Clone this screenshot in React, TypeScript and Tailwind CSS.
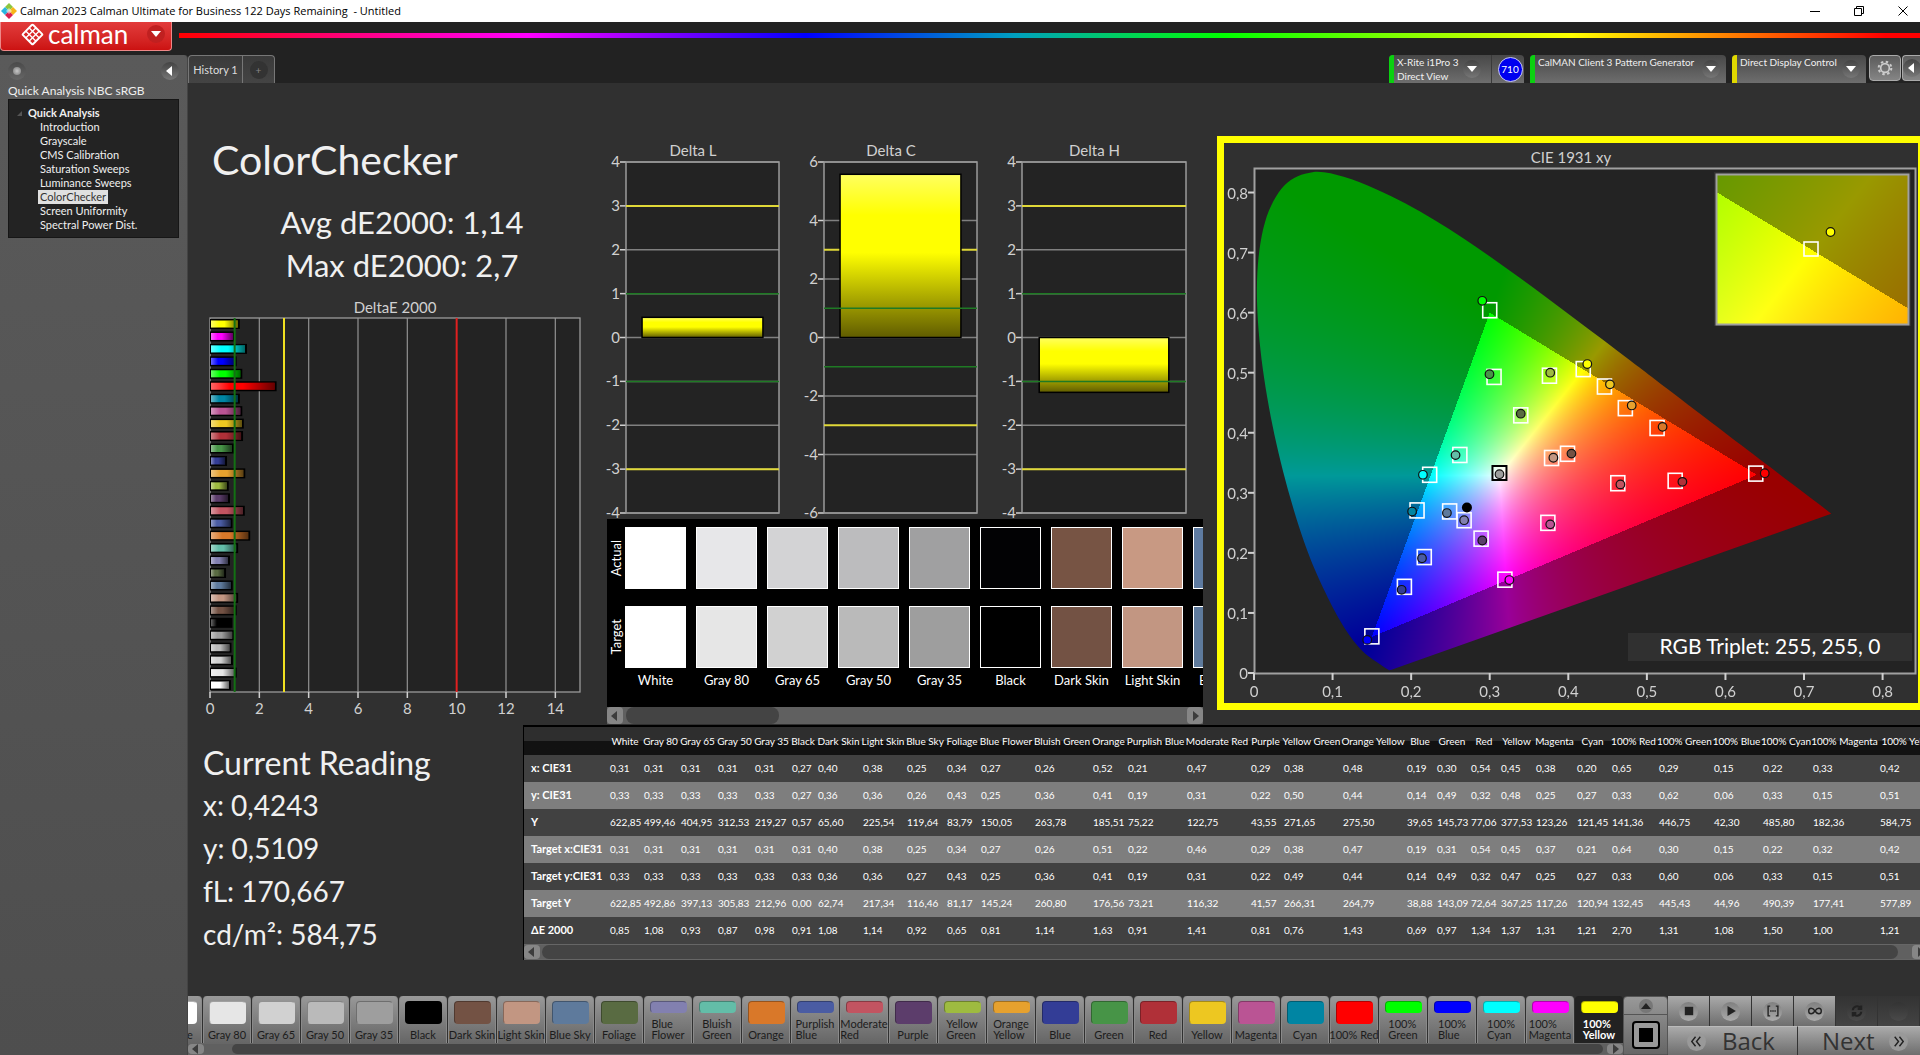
import { useEffect, useRef } from "react";
import type { ReactNode } from "react";
import clsx from "clsx";

type Patch = {
  name: string;
  color: string;
  width: number;
  values: string[];
};

const ROW_LABELS = ["x: CIE31", "y: CIE31", "Y", "Target x:CIE31", "Target y:CIE31", "Target Y", "ΔE 2000"];

const p = (name: string, color: string, width: number, values: string): Patch => ({
  name,
  color,
  width,
  values: values.split(" "),
});

const PATCHES: Patch[] = [
  p("White", "#ffffff", 34, "0,31 0,33 622,85 0,31 0,33 622,85 0,85"),
  p("Gray 80", "#e6e6e6", 37, "0,31 0,33 499,46 0,31 0,33 492,86 1,08"),
  p("Gray 65", "#d1d1d1", 37, "0,31 0,33 404,95 0,31 0,33 397,13 0,93"),
  p("Gray 50", "#bababa", 37, "0,31 0,33 312,53 0,31 0,33 305,83 0,87"),
  p("Gray 35", "#9e9e9e", 37, "0,31 0,33 219,27 0,31 0,33 212,96 0,98"),
  p("Black", "#000000", 26, "0,27 0,27 0,57 0,31 0,33 0,00 0,91"),
  p("Dark Skin", "#735244", 45, "0,40 0,36 65,60 0,40 0,36 62,74 1,08"),
  p("Light Skin", "#c29682", 44, "0,38 0,36 225,54 0,38 0,36 217,34 1,14"),
  p("Blue Sky", "#5e7a9c", 40, "0,25 0,26 119,64 0,25 0,27 116,46 0,92"),
  p("Foliage", "#596b42", 34, "0,34 0,43 83,79 0,34 0,43 81,17 0,65"),
  p("Blue Flower", "#8280b0", 54, "0,27 0,25 150,05 0,27 0,25 145,24 0,81"),
  p("Bluish Green", "#63bda8", 58, "0,26 0,36 263,78 0,26 0,36 260,80 1,14"),
  p("Orange", "#d97829", 35, "0,52 0,41 185,51 0,51 0,41 176,56 1,63"),
  p("Purplish Blue", "#4a5ca3", 59, "0,21 0,19 75,22 0,22 0,19 73,21 0,91"),
  p("Moderate Red", "#c25461", 64, "0,47 0,31 122,75 0,46 0,31 116,32 1,41"),
  p("Purple", "#5c3d6b", 33, "0,29 0,22 43,55 0,29 0,22 41,57 0,81"),
  p("Yellow Green", "#9ebb40", 59, "0,38 0,50 271,65 0,38 0,49 266,31 0,76"),
  p("Orange Yellow", "#e6a12e", 64, "0,48 0,44 275,50 0,47 0,44 264,79 1,43"),
  p("Blue", "#333d96", 30, "0,19 0,14 39,65 0,19 0,14 38,88 0,69"),
  p("Green", "#479447", 34, "0,30 0,49 145,73 0,31 0,49 143,09 0,97"),
  p("Red", "#b03038", 30, "0,54 0,32 77,06 0,54 0,32 72,64 1,34"),
  p("Yellow", "#edc721", 35, "0,45 0,48 377,53 0,45 0,47 367,25 1,37"),
  p("Magenta", "#ba5494", 41, "0,38 0,25 123,26 0,37 0,25 117,26 1,31"),
  p("Cyan", "#0085a3", 35, "0,20 0,27 121,45 0,21 0,27 120,94 1,21"),
  p("100% Red", "#ff0000", 47, "0,65 0,33 141,36 0,64 0,33 132,45 2,70"),
  p("100% Green", "#00ff00", 55, "0,29 0,62 446,75 0,30 0,60 445,43 1,31"),
  p("100% Blue", "#0000ff", 49, "0,15 0,06 42,30 0,15 0,06 44,96 1,08"),
  p("100% Cyan", "#00ffff", 50, "0,22 0,33 485,80 0,22 0,33 490,39 1,50"),
  p("100% Magenta", "#ff00ff", 67, "0,33 0,15 182,36 0,32 0,15 177,41 1,00"),
  p("100% Yellow", "#ffff00", 63, "0,42 0,51 584,75 0,42 0,51 577,89 1,21"),
];

const ACTUAL = ["#ffffff", "#e7e7e9", "#d3d3d5", "#bcbcbe", "#a0a0a1", "#020204", "#775444", "#c89983", "#5e7ba1"];

// spectral locus, CIE 1931 2 degree observer
const LOCUS: [number, number][] = [
  [0.1741, 0.005], [0.1714, 0.0051], [0.1644, 0.0109], [0.1566, 0.0177], [0.144, 0.0297],
  [0.1355, 0.0399], [0.1241, 0.0578], [0.1096, 0.0868], [0.0913, 0.1327], [0.0687, 0.2007],
  [0.0454, 0.295], [0.0235, 0.4127], [0.0082, 0.5384], [0.0039, 0.6548], [0.0139, 0.7502],
  [0.0389, 0.812], [0.0743, 0.8338], [0.1142, 0.8262], [0.1547, 0.8059], [0.1929, 0.7816],
  [0.2296, 0.7543], [0.2658, 0.7243], [0.3016, 0.6923], [0.3373, 0.6589], [0.3731, 0.6245],
  [0.4087, 0.5896], [0.4441, 0.5547], [0.4788, 0.5202], [0.5125, 0.4866], [0.5752, 0.4242],
  [0.627, 0.3725], [0.6915, 0.3083], [0.7347, 0.2653],
];

// target x, target y, measured x, measured y, fill
const POINTS: [number, number, number, number, string][] = [
  [0.3, 0.604, 0.2905, 0.6197, "#00ff00"],
  [0.3055, 0.493, 0.2997, 0.4975, "#479447"],
  [0.376, 0.495, 0.377, 0.5, "#9ebb40"],
  [0.419, 0.506, 0.4242, 0.5144, "#ffff00"],
  [0.446, 0.477, 0.453, 0.4806, "#edc721"],
  [0.4726, 0.441, 0.4807, 0.4455, "#e6a12e"],
  [0.513, 0.408, 0.52, 0.4098, "#d97829"],
  [0.3395, 0.429, 0.3395, 0.4317, "#596b42"],
  [0.262, 0.363, 0.2565, 0.3628, "#63bda8"],
  [0.2236, 0.33, 0.215, 0.33, "#00ffff"],
  [0.3787, 0.358, 0.381, 0.3584, "#c29682"],
  [0.399, 0.365, 0.404, 0.3653, "#735244"],
  [0.463, 0.316, 0.4663, 0.314, "#c25461"],
  [0.536, 0.32, 0.5452, 0.3183, "#b03038"],
  [0.6386, 0.332, 0.65, 0.3327, "#ff0000"],
  [0.2075, 0.2707, 0.2012, 0.2688, "#0085a3"],
  [0.249, 0.269, 0.2455, 0.2663, "#5e7a9c"],
  [0.2674, 0.2544, 0.2674, 0.2544, "#8280b0"],
  [0.289, 0.2237, 0.2905, 0.2206, "#5c3d6b"],
  [0.374, 0.25, 0.377, 0.2475, "#ba5494"],
  [0.2167, 0.193, 0.2138, 0.1911, "#4a5ca3"],
  [0.1914, 0.1435, 0.1879, 0.1385, "#333d96"],
  [0.3193, 0.1554, 0.325, 0.1548, "#ff00ff"],
  [0.15, 0.061, 0.1441, 0.0551, "#0000ff"],
];

const TREE = [
  "Introduction",
  "Grayscale",
  "CMS Calibration",
  "Saturation Sweeps",
  "Luminance Sweeps",
  "ColorChecker",
  "Screen Uniformity",
  "Spectral Power Dist.",
];

type GamutProps = {
  width: number;
  height: number;
  x0: number;
  y0: number;
  sx: number;
  sy: number;
  clip?: boolean;
};

// x0/y0: chromaticity at the bottom left corner, sx/sy: pixels per unit
const GamutCanvas = ({ width, height, x0, y0, sx, sy, clip }: GamutProps) => {
  const ref = useRef<HTMLCanvasElement>(null);

  useEffect(() => {
    const canvas = ref.current;
    const ctx = canvas?.getContext("2d");
    if (!canvas || !ctx) return;

    const buffer = document.createElement("canvas");
    buffer.width = width;
    buffer.height = height;
    const bctx = buffer.getContext("2d")!;
    const img = bctx.createImageData(width, height);
    for (let j = 0; j < height; j++) {
      for (let i = 0; i < width; i++) {
        const x = x0 + (i + 0.5) / sx;
        const y = Math.max(y0 + (height - j - 0.5) / sy, 0.001);
        const z = 1 - x - y;
        const rgb = [
          3.2406 * x - 1.5372 * y - 0.4986 * z,
          -0.9689 * x + 1.8758 * y + 0.0415 * z,
          0.0557 * x - 0.204 * y + 1.057 * z,
        ];
        const inside = Math.min(...rgb) >= 0;
        const max = Math.max(...rgb);
        const k = (inside ? 255 : 153) / max;
        const o = (j * width + i) * 4;
        rgb.forEach((v, n) => {
          img.data[o + n] = Math.max(v, 0) * k;
        });
        img.data[o + 3] = 255;
      }
    }
    bctx.putImageData(img, 0, 0);

    ctx.clearRect(0, 0, width, height);
    ctx.save();
    if (clip) {
      const pts = LOCUS.map(([x, y]) => [(x - x0) * sx, height - (y - y0) * sy]);
      ctx.beginPath();
      ctx.moveTo(pts[0][0], pts[0][1]);
      for (let i = 0; i < pts.length - 1; i++) {
        const a = pts[Math.max(i - 1, 0)];
        const b = pts[i];
        const c = pts[i + 1];
        const d = pts[Math.min(i + 2, pts.length - 1)];
        ctx.bezierCurveTo(
          b[0] + (c[0] - a[0]) / 6,
          b[1] + (c[1] - a[1]) / 6,
          c[0] - (d[0] - b[0]) / 6,
          c[1] - (d[1] - b[1]) / 6,
          c[0],
          c[1],
        );
      }
      ctx.closePath();
      ctx.clip();
    }
    ctx.drawImage(buffer, 0, 0);
    ctx.restore();
  }, [width, height, x0, y0, sx, sy, clip]);

  return <canvas ref={ref} width={width} height={height} className="block" />;
};

const TARGET_W = 14;
const TARGET_H = 15;

const CieChart = () => {
  const left = 30;
  const bottom = 530;
  const px = (x: number) => left + x * 785.75;
  const py = (y: number) => bottom - y * 600.6;
  const ticks = [0, 1, 2, 3, 4, 5, 6, 7, 8];
  const label = (t: number) => (t === 0 ? "0" : `0,${t}`);

  return (
    <svg viewBox="0 0 694 560" className="block w-full" role="img" aria-label="CIE 1931 xy">
      <text x="347" y="20" textAnchor="middle" fontSize="15" fill="#d0d0d0">
        CIE 1931 xy
      </text>
      <rect x="30" y="25" width="661" height="505" fill="#232323" />
      <foreignObject x="30" y="25" width="661" height="505">
        <GamutCanvas width={661} height={505} x0={0} y0={0} sx={785.75} sy={600.6} clip />
      </foreignObject>
      <rect x="30.5" y="25.5" width="661" height="505" fill="none" stroke="#a0a0a0" strokeWidth="2" />
      {ticks.map((t) => (
        <g key={t} fontSize="15" fill="#d0d0d0" stroke="none">
          <line x1={px(t / 10)} x2={px(t / 10)} y1="530" y2="537" stroke="#d0d0d0" strokeWidth="2" />
          <line x1="24" x2="30" y1={py(t / 10)} y2={py(t / 10)} stroke="#d0d0d0" strokeWidth="2" />
          <text x={px(t / 10)} y="554" textAnchor="middle">
            {label(t)}
          </text>
          <text x="24" y={py(t / 10) + 6} textAnchor="end">
            {label(t)}
          </text>
        </g>
      ))}
      {POINTS.map(([tx, ty]) => (
        <rect
          key={`${tx}-${ty}`}
          x={px(tx) - TARGET_W / 2}
          y={py(ty) - TARGET_H / 2}
          width={TARGET_W}
          height={TARGET_H}
          fill="none"
          stroke="#fff"
          strokeWidth="1.6"
        />
      ))}
      <rect
        x={px(0.3124) - 7}
        y={py(0.333) - 7}
        width="14"
        height="14"
        fill="#fff"
        fillOpacity="0.5"
        stroke="#000"
        strokeWidth="2"
      />
      {POINTS.map(([, , mx, my, color]) => (
        <circle key={`${mx}-${my}`} cx={px(mx)} cy={py(my)} r="4.3" fill={color} stroke="#111" strokeWidth="1.2" />
      ))}
      <circle cx={px(0.3124)} cy={py(0.331)} r="4.3" fill="#9e9e9e" stroke="#111" strokeWidth="1.2" />
      <circle cx={px(0.271)} cy={py(0.2757)} r="5" fill="#000" />

      <rect x="490" y="29" width="197" height="154" fill="#303030" />
      <foreignObject x="492" y="31" width="193" height="150">
        <GamutCanvas width={193} height={150} x0={0.3925} y0={0.4785} sx={3600} sy={2752} />
      </foreignObject>
      <rect x="492.5" y="31.5" width="192" height="150" fill="none" stroke="#a0a0a0" strokeWidth="2" />
      <rect x="580" y="99" width="14" height="14" fill="none" stroke="#fff" strokeWidth="1.6" />
      <circle cx="606.5" cy="89" r="4.3" fill="#ffff00" stroke="#111" strokeWidth="1.2" />

      <rect x="404" y="490" width="284" height="28" fill="#303030" />
      <text x="546" y="511" textAnchor="middle" fontSize="21" fill="#fff">
        RGB Triplet: 255, 255, 0
      </text>
    </svg>
  );
};

const DeltaEChart = () => {
  const px = (v: number) => 22 + (v * 370) / 15;
  const bars = [...PATCHES].reverse();

  return (
    <svg viewBox="0 0 412 438" className="block w-full" role="img" aria-label="DeltaE 2000">
      <defs>
        <linearGradient id="barShadeX" x1="0" x2="1" y1="0" y2="0">
          <stop offset="0" stopColor="#ffffff" stopOpacity="0.4" />
          <stop offset="0.3" stopColor="#ffffff" stopOpacity="0" />
          <stop offset="0.5" stopColor="#000000" stopOpacity="0" />
          <stop offset="1" stopColor="#000000" stopOpacity="0.6" />
        </linearGradient>
      </defs>
      <text x="207" y="26" textAnchor="middle" fontSize="15" fill="#d0d0d0">
        DeltaE 2000
      </text>
      <rect x="22" y="31" width="370" height="374" fill="#232323" />
      {[2, 4, 6, 8, 12, 14].map((t) => (
        <line key={t} x1={px(t)} x2={px(t)} y1="31" y2="405" stroke="#8a8a8a" strokeWidth="1.3" />
      ))}
      <rect x="22" y="31" width="370" height="374" fill="none" stroke="#9a9a9a" strokeWidth="1.3" />
      {bars.map((patch, i) => {
        const v = parseFloat(patch.values[6].replace(",", "."));
        const y = 32 + i * 12.45;
        return (
          <g key={patch.name}>
            <rect x="22" y={y} width={px(v) - 22} height="10" fill="#000" />
            <rect x="23" y={y + 1.5} width={px(v) - 25} height="7" fill={patch.color} />
            <rect x="23" y={y + 1.5} width={px(v) - 25} height="7" fill="url(#barShadeX)" />
          </g>
        );
      })}
      <line x1={px(1)} x2={px(1)} y1="31" y2="405" stroke="#137013" strokeWidth="2" />
      <line x1={px(3)} x2={px(3)} y1="31" y2="405" stroke="#f0e020" strokeWidth="2" />
      <line x1={px(10)} x2={px(10)} y1="31" y2="405" stroke="#e02020" strokeWidth="2" />
      {[0, 2, 4, 6, 8, 10, 12, 14].map((t) => (
        <g key={t}>
          <line x1={px(t)} x2={px(t)} y1="405" y2="411" stroke="#d0d0d0" strokeWidth="1.5" />
          <text x={px(t)} y="427" textAnchor="middle" fontSize="15" fill="#d0d0d0">
            {t}
          </text>
        </g>
      ))}
    </svg>
  );
};

type DeltaChartProps = {
  title: string;
  id: string;
  width: number;
  max: number;
  step: number;
  value: number;
};

const DeltaChart = ({ title, id, width, max, step, value }: DeltaChartProps) => {
  const left = 26;
  const right = width - 19;
  const top = 27;
  const bottom = 378;
  const plot = right - left;
  const py = (v: number) => top + ((max - v) * (bottom - top)) / (2 * max);
  const ticks: number[] = [];
  for (let t = -max; t <= max; t += step) ticks.push(t);
  const barTop = py(Math.max(value, 0));
  const barHeight = py(Math.min(value, 0)) - barTop;
  const barLeft = left + plot * 0.105;
  const barWidth = plot * 0.79;

  return (
    <svg viewBox={`0 0 ${width} 384`} className="block w-full" role="img" aria-label={title}>
      <defs>
        <linearGradient id={id} x1="0" x2="0" y1="0" y2="1">
          <stop offset="0" stopColor="#ffff60" />
          <stop offset="0.25" stopColor="#ffff00" />
          <stop offset="0.48" stopColor="#ffff00" />
          <stop offset="1" stopColor="#605c00" />
        </linearGradient>
      </defs>
      <text x={width / 2 - 6} y="21" textAnchor="middle" fontSize="15" fill="#d0d0d0">
        {title}
      </text>
      <rect x={left} y={top} width={plot} height={bottom - top} fill="#232323" />
      {ticks.map((t) => (
        <g key={t}>
          <line x1={left} x2={right} y1={py(t)} y2={py(t)} stroke="#808080" strokeWidth="1.5" />
          <line x1={left - 6} x2={left} y1={py(t)} y2={py(t)} stroke="#d0d0d0" strokeWidth="1.5" />
          <text x={left - 6} y={py(t) + 5} textAnchor="end" fontSize="15" fill="#d0d0d0">
            {t}
          </text>
        </g>
      ))}
      <rect x={left} y={top} width={plot} height={bottom - top} fill="none" stroke="#9a9a9a" strokeWidth="1.5" />
      {[3, -3].map((t) => (
        <line key={t} x1={left} x2={right} y1={py(t)} y2={py(t)} stroke="#e0d838" strokeWidth="2" />
      ))}
      <rect
        x={barLeft}
        y={barTop}
        width={barWidth}
        height={barHeight}
        fill={`url(#${id})`}
        stroke="#000"
        strokeWidth="1.5"
      />
      {[1, -1].map((t) => (
        <line key={t} x1={left} x2={right} y1={py(t)} y2={py(t)} stroke="#1f7a24" strokeWidth="1.5" />
      ))}
    </svg>
  );
};

type ArrowProps = {
  dir: "left" | "right" | "up" | "down";
  className?: string;
};

const ARROWS = {
  left: "M7 0 L1 5 L7 10 Z",
  right: "M3 0 L9 5 L3 10 Z",
  up: "M0 8 L5 2 L10 8 Z",
  down: "M0 2 L5 8 L10 2 Z",
};

const Arrow = ({ dir, className }: ArrowProps) => (
  <svg viewBox="0 0 10 10" className={clsx("size-2.5", className)} fill="currentColor" aria-hidden="true">
    <path d={ARROWS[dir]} />
  </svg>
);

const RoundArrow = ({ dir }: ArrowProps) => (
  <span className="grid size-[18px] shrink-0 place-items-center rounded-full bg-linear-to-b from-[#444] to-[#777] text-white">
    <Arrow dir={dir} />
  </span>
);

type ScrollbarProps = {
  label: string;
  className?: string;
  thumb: string;
};

const Scrollbar = ({ label, className, thumb }: ScrollbarProps) => (
  <div className={clsx("flex items-stretch bg-[#606060]", className)}>
    <button
      type="button"
      aria-label={`Scroll ${label} left`}
      className="grid w-4 shrink-0 place-items-center rounded-sm bg-[#868686] text-[#3c3c3c]"
    >
      <Arrow dir="left" />
    </button>
    <div className="flex min-w-0 flex-1">
      <div className={clsx("rounded-lg bg-[#444]", thumb)} />
    </div>
    <button
      type="button"
      aria-label={`Scroll ${label} right`}
      className="grid w-4 shrink-0 place-items-center rounded-sm bg-[#868686] text-[#3c3c3c]"
    >
      <Arrow dir="right" />
    </button>
  </div>
);

const TitleBar = () => (
  <header className="flex h-[22px] items-center bg-white text-black">
    <svg viewBox="0 0 16 16" className="ml-px size-4" aria-hidden="true">
      <path d="M8 0 L12 4 L8 8 L4 4 Z" fill="#8dc63f" />
      <path d="M4 4 L8 8 L4 12 L0 8 Z" fill="#29b6e0" />
      <path d="M12 4 L16 8 L12 12 L8 8 Z" fill="#f7b518" />
      <path d="M8 8 L12 12 L8 16 L4 12 Z" fill="#d8204f" />
      <path d="M8 5 L11 8 L8 11 L5 8 Z" fill="#fff" fillOpacity="0.55" />
    </svg>
    <h1 className="ml-[3px] font-['Open_Sans',sans-serif] text-[11px] whitespace-pre">
      Calman 2023 Calman Ultimate for Business 122 Days Remaining  - Untitled
    </h1>
    <div className="ml-auto flex">
      <button type="button" aria-label="Minimize" className="grid w-11 place-items-center">
        <svg viewBox="0 0 10 10" className="size-2.5" stroke="currentColor" fill="none">
          <path d="M0 5.5 H10" />
        </svg>
      </button>
      <button type="button" aria-label="Restore" className="grid w-11 place-items-center">
        <svg viewBox="0 0 10 10" className="size-2.5" stroke="currentColor" fill="none">
          <path d="M0.5 2.5 H7.5 V9.5 H0.5 Z M2.5 2.5 V0.5 H9.5 V7.5 H7.5" />
        </svg>
      </button>
      <button type="button" aria-label="Close" className="mr-[-5px] grid w-11 place-items-center">
        <svg viewBox="0 0 10 10" className="size-2.5" stroke="currentColor" fill="none">
          <path d="M0.5 0.5 L9.5 9.5 M9.5 0.5 L0.5 9.5" />
        </svg>
      </button>
    </div>
  </header>
);

const BrandBar = () => (
  <div className="flex h-[33px] items-start">
    <button
      type="button"
      className="flex h-[29px] w-[172px] items-center rounded-b-sm border border-t-0 border-[#e88] bg-linear-to-b from-[#e23b3b] to-[#cc1111] pb-1 pl-5 text-white"
    >
      <svg viewBox="0 0 24 24" className="size-[23px]" aria-hidden="true">
        <g transform="rotate(45 12 12)">
          <rect x="3.500" y="3.500" width="17" height="17" rx="2" fill="#fff" />
          <path
            d="M5.500 5.500 h3.400 v3.400 h-3.400 Z M10.300 5.500 h3.400 v3.400 h-3.400 Z M15.100 5.500 h3.400 v3.400 h-3.400 Z M5.500 10.300 h3.400 v3.400 h-3.400 Z M10.300 10.300 h3.400 v3.400 h-3.400 Z M15.100 10.300 h3.400 v3.400 h-3.400 Z M5.500 15.100 h3.400 v3.400 h-3.400 Z M10.300 15.100 h3.400 v3.400 h-3.400 Z M15.100 15.100 h3.400 v3.400 h-3.400 Z"
            fill="#d82828"
          />
        </g>
      </svg>
      <span className="ml-1 text-[26px] leading-6">calman</span>
      <span className="mr-1.5 ml-auto grid size-[18px] place-items-center rounded-full bg-[#c02020]">
        <Arrow dir="down" />
      </span>
    </button>
    <div className="mt-[11px] ml-[7px] h-[5px] flex-1 [background-image:linear-gradient(to_right,#ff0000,#ff00ff_20%,#0000ff_36%,#00a0c0_48%,#00ff00_60%,#ffff00_80%,#ff0000_98%)]" />
  </div>
);

const Sidebar = () => (
  <aside className="w-[188px] shrink-0 rounded-tr-sm border-r border-[#444] bg-linear-to-b from-[#5a5a5a] to-[#4e4e4e] px-2">
    <div className="flex h-7 items-center justify-between pt-[3px]">
      <button
        type="button"
        aria-label="Workflow options"
        className="grid size-[18px] place-items-center rounded-full bg-linear-to-b from-[#4a4a4a] to-[#666]"
      >
        <span className="size-2 rounded-full bg-radial from-[#c8c8c8] to-[#777]" />
      </button>
      <button type="button" aria-label="Collapse sidebar">
        <RoundArrow dir="left" />
      </button>
    </div>
    <h2 className="text-[12px] leading-4 whitespace-nowrap text-[#eee]">Quick Analysis NBC sRGB</h2>
    <nav className="h-[139px] border border-[#161616] bg-[#232323] pt-1.5 text-[11px] text-[#f0f0f0]">
      <p className="flex items-center leading-[14px] font-bold">
        <svg viewBox="0 0 6 6" className="mr-1.5 ml-2 size-[5px] fill-[#555]" aria-hidden="true">
          <path d="M6 0 V6 H0 Z" />
        </svg>
        Quick Analysis
      </p>
      <ul className="ml-[29px]">
        {TREE.map((item) => (
          <li key={item} className="flex h-[14px]">
            <button
              type="button"
              className={clsx(
                "px-0.5 leading-[14px] whitespace-nowrap",
                item === "ColorChecker" && "bg-[#e0e0e0] text-[#333]",
              )}
            >
              {item}
            </button>
          </li>
        ))}
      </ul>
    </nav>
  </aside>
);

type DeviceTabProps = {
  status: "green" | "yellow";
  className?: string;
  children: ReactNode;
};

const DeviceTab = ({ status, className, children }: DeviceTabProps) => (
  <div className={clsx("flex h-7 overflow-hidden rounded-t bg-linear-to-b from-[#484848] to-[#6e6e6e]", className)}>
    <div className={clsx("w-[5px] shrink-0", status === "green" ? "bg-[#0bd010]" : "bg-[#e0d800]")} />
    {children}
  </div>
);

const TabBar = () => (
  <div className="flex h-7 items-start text-[10px] leading-[14px] text-[#f0f0f0]">
    <div className="flex h-7 rounded-t border border-b-0 border-[#777] bg-linear-to-b from-[#3a3a3a] to-[#444]">
      <button type="button" className="w-[54px] border-r border-[#777] text-center text-[11px] text-[#ddd]">
        History 1
      </button>
      <button type="button" aria-label="Add history" className="grid w-[31px] place-items-center">
        <span className="grid size-[18px] place-items-center rounded-full bg-[#333] text-[#888]">+</span>
      </button>
    </div>
    <div className="ml-auto flex">
      <DeviceTab status="green" className="w-[135px]">
        <button
          type="button"
          className="flex flex-1 items-center justify-between pr-2.5 pl-[3px] text-left whitespace-nowrap"
        >
          <span>
            X-Rite i1Pro 3<br />
            Direct View
          </span>
          <RoundArrow dir="down" />
        </button>
        <div className="grid w-[33px] place-items-center border-l border-[#3a3a3a] pl-1">
          <span className="grid size-[25px] place-items-center rounded-full border border-[#cce] bg-[#0000f0] text-white">
            710
          </span>
        </div>
      </DeviceTab>
      <DeviceTab status="green" className="ml-1.5 w-[196px]">
        <button type="button" className="flex flex-1 justify-between pr-1.5 pl-[3px] text-left whitespace-nowrap">
          CalMAN Client 3 Pattern Generator
          <span className="mt-[5px]">
            <RoundArrow dir="down" />
          </span>
        </button>
      </DeviceTab>
      <DeviceTab status="yellow" className="ml-1.5 w-[134px]">
        <button type="button" className="flex flex-1 justify-between pr-1.5 pl-[3px] text-left whitespace-nowrap">
          Direct Display Control
          <span className="mt-[5px]">
            <RoundArrow dir="down" />
          </span>
        </button>
      </DeviceTab>
      <button
        type="button"
        aria-label="Settings"
        className="ml-[3px] grid h-[26px] w-8 place-items-center rounded border border-[#aaa] bg-linear-to-b from-[#5c5c5c] to-[#858585]"
      >
        <svg viewBox="0 0 24 24" className="size-4" fill="none" stroke="#ccc" aria-hidden="true">
          <circle cx="12" cy="12" r="6.5" strokeWidth="2.5" />
          <circle cx="12" cy="12" r="9.5" strokeWidth="3" strokeDasharray="3.7 3.76" />
        </svg>
      </button>
      <button
        type="button"
        aria-label="Collapse panel"
        className="ml-px grid h-[26px] w-[18px] place-items-center overflow-hidden rounded-l border border-r-0 border-[#aaa] bg-linear-to-b from-[#5c5c5c] to-[#858585]"
      >
        <RoundArrow dir="left" />
      </button>
    </div>
  </div>
);

const SwatchRow = ({ label, colors }: { label: string; colors: string[] }) => (
  <div className="flex h-[62px]">
    <div className="grid w-[18px] shrink-0 place-items-center">
      <span className="rotate-180 text-[13px] leading-4 text-white [writing-mode:vertical-rl]">{label}</span>
    </div>
    <div className="flex gap-2.5">
      {colors.map((color, i) => (
        <div key={i} className="w-[61px] shrink-0 border border-white" style={{ backgroundColor: color }} />
      ))}
    </div>
  </div>
);

const SwatchPanel = () => (
  <section className="mr-0.5 ml-[7px] bg-black">
    <div className="overflow-hidden pt-2 pb-[19px]">
      <SwatchRow label="Actual" colors={ACTUAL} />
      <div className="h-[17px]" />
      <SwatchRow label="Target" colors={PATCHES.slice(0, 9).map((patch) => patch.color)} />
      <div className="ml-[18px] flex gap-2.5 pt-1 text-[13px] leading-4 text-white">
        {PATCHES.slice(0, 9).map((patch) => (
          <span key={patch.name} className="w-[61px] shrink-0 text-center whitespace-nowrap">
            {patch.name}
          </span>
        ))}
      </div>
    </div>
    <Scrollbar label="swatches" className="h-[17px]" thumb="ml-[3px] w-[153px]" />
  </section>
);

const ReadingsTable = () => (
  <div className="min-w-0 flex-1 overflow-hidden border-t-2 border-l border-black bg-[#444]">
    <table className="w-[1417px] table-fixed border-collapse text-[10px] whitespace-nowrap text-white">
      <colgroup>
        <col className="w-[84px]" />
        {PATCHES.map((patch) => (
          <col key={patch.name} style={{ width: patch.width }} />
        ))}
      </colgroup>
      <thead>
        <tr className="h-7 bg-linear-to-b from-[#2e2e2e] from-50% to-[#121212] to-50%">
          <td />
          {PATCHES.map((patch) => (
            <th key={patch.name} scope="col" className="p-0 text-center font-normal">
              {patch.name}
            </th>
          ))}
        </tr>
      </thead>
      <tbody>
        {ROW_LABELS.map((label, row) => (
          <tr key={label} className="h-[27px] odd:bg-[#414141] even:bg-[#7e7e7e]">
            <th scope="row" className="p-0 pl-[7px] text-left text-[11px] font-bold">
              {label}
            </th>
            {PATCHES.map((patch) => (
              <td key={patch.name} className="p-0 pl-0.5">
                {patch.values[row]}
              </td>
            ))}
          </tr>
        ))}
      </tbody>
    </table>
    <Scrollbar label="readings" className="-mr-2 h-4 border-y border-[#666]" thumb="ml-0.5 mr-3.5 flex-1" />
  </div>
);

const PatchStrip = () => (
  <div className="min-w-0 flex-1 overflow-hidden">
    <div className="ml-[-34px] flex gap-px">
      {PATCHES.map((patch) => {
        const selected = patch.name === "100% Yellow";
        const parts = patch.name.split(" ");
        const twoLines = parts.length === 2 && (patch.name.length > 10 || patch.name.startsWith("100% ")) && parts[1] !== "Red" || patch.name === "Moderate Red";
        return (
          <button
            key={patch.name}
            type="button"
            className={clsx(
              "flex h-[47px] w-12 shrink-0 flex-col items-center rounded-t border-x pt-[5px] text-[11px] leading-[11px]",
              selected
                ? "border-[#222] bg-[#222] font-bold text-white"
                : "border-[#8a8a8a] bg-linear-to-b from-[#999] to-[#666] text-[#1c1c1c]",
            )}
          >
            <span
              className={clsx(
                "w-[37px] shrink-0 rounded-sm border border-t-black/30 border-r-transparent border-b-transparent border-l-black/30",
                twoLines ? "h-3" : "h-[23px]",
              )}
              style={{ backgroundColor: patch.color }}
            />
            <span className={clsx("mt-[5px] text-left", !twoLines && "whitespace-nowrap")}>
              {twoLines ? (
                <>
                  {parts[0]}
                  <br />
                  {parts[1]}
                </>
              ) : (
                patch.name
              )}
            </span>
          </button>
        );
      })}
    </div>
    <Scrollbar label="patches" className="h-3 border-y border-[#666]" thumb="ml-7 mr-1 flex-1" />
  </div>
);

const TRANSPORT: { label: string; icon: ReactNode; off?: boolean }[] = [
  { label: "Stop", icon: <rect x="4" y="4" width="12" height="12" fill="currentColor" stroke="none" /> },
  { label: "Play", icon: <path d="M5 3 L17 10 L5 17 Z" fill="currentColor" stroke="none" /> },
  { label: "Read series", icon: <path d="M6 3 H3 V17 H6 M14 3 H17 V17 H14 M6 10 H8 M9 10 H11 M12 10 H14" /> },
  {
    label: "Read continuous",
    icon: (
      <path d="M10 10 C8 7 6.500 6 4.500 6 C2.500 6 1 8 1 10 C1 12 2.500 14 4.500 14 C6.500 14 8 13 10 10 C12 7 13.500 6 15.500 6 C17.500 6 19 8 19 10 C19 12 17.500 14 15.500 14 C13.500 14 12 13 10 10 Z" />
    ),
  },
  {
    label: "Repeat",
    icon: <path strokeWidth="3" d="M4 9 A6 6 0 0 1 15 6 M16 2 V7 H11 M16 11 A6 6 0 0 1 5 14 M4 18 V13 H9" />,
    off: true,
  },
  { label: "Options", icon: null, off: true },
];

const BottomBar = () => (
  <footer className="flex h-[59px] shrink-0 text-[#222]">
    <PatchStrip />
    <div className="flex w-[45px] shrink-0 flex-col rounded-t border border-[#555] bg-linear-to-b from-[#999] to-[#666]">
      <button type="button" aria-label="Expand" className="grid h-[18px] place-items-center border-b border-[#555]">
        <span className="grid size-3.5 place-items-center rounded-full bg-[#777]">
          <Arrow dir="up" className="size-2" />
        </span>
      </button>
      <button type="button" aria-label="Pattern window" className="grid flex-1 place-items-center">
        <span className="grid size-7 place-items-center rounded-sm border-2 border-black bg-[#999]">
          <span className="size-3.5 bg-black" />
        </span>
      </button>
    </div>
    <div className="flex w-[252px] shrink-0 flex-col">
      <div className="flex h-[30px]">
        {TRANSPORT.map((item) => (
          <button
            key={item.label}
            type="button"
            aria-label={item.label}
            disabled={item.off}
            className={clsx(
              "grid flex-1 place-items-center border-r border-[#333] bg-linear-to-b",
              item.off ? "from-[#333] to-[#444]" : "from-[#aaa] to-[#6e6e6e]",
            )}
          >
            <span
              className={clsx(
                "grid size-[19px] place-items-center rounded-full bg-linear-to-b",
                item.off ? "from-[#333] to-[#4a4a4a]" : "from-[#808080] to-[#aaa]",
              )}
            >
              <svg viewBox="0 0 20 20" className="size-3.5" fill="none" stroke="currentColor" strokeWidth="2">
                {item.icon}
              </svg>
            </span>
          </button>
        ))}
      </div>
      <div className="flex flex-1 text-[24px] leading-6 text-[#333]">
        <button
          type="button"
          className="flex w-[130px] items-center gap-4 border-t border-r border-t-[#bbb] border-r-[#333] bg-linear-to-b from-[#aaa] to-[#6e6e6e] pl-[19px] font-['Open_Sans',sans-serif]"
        >
          <svg viewBox="0 0 20 20" className="size-[19px] rounded-full bg-[#999]" fill="none" stroke="#222" strokeWidth="1.5">
            <path d="M9 5 L5 10 L9 15 M14 5 L10 10 L14 15" />
          </svg>
          Back
        </button>
        <button
          type="button"
          className="flex flex-1 items-center justify-between border-t border-[#bbb] bg-linear-to-b from-[#aaa] to-[#6e6e6e] pr-3 pl-6 font-['Open_Sans',sans-serif]"
        >
          Next
          <svg viewBox="0 0 20 20" className="size-[19px] rounded-full bg-[#999]" fill="none" stroke="#222" strokeWidth="1.5">
            <path d="M6 5 L10 10 L6 15 M11 5 L15 10 L11 15" />
          </svg>
        </button>
      </div>
    </div>
  </footer>
);

const App = () => (
  <div className="flex min-h-screen flex-col overflow-hidden bg-[#222] font-[Lato,sans-serif] text-[#f0f0f0]">
    <TitleBar />
    <BrandBar />
    <div className="flex flex-1">
      <Sidebar />
      <div className="flex min-w-0 flex-1 flex-col">
        <TabBar />
        <main className="flex-1 bg-[#303030]">
          <div className="grid grid-cols-[minmax(0,412fr)_minmax(0,605fr)_minmax(0,715fr)]">
            <section className="pt-[52px]">
              <h2 className="pl-6 text-[41px] leading-[50px]">ColorChecker</h2>
              <div className="mt-4 pl-4 text-center text-[31px] leading-[43px]">
                <p>Avg dE2000: 1,14</p>
                <p>Max dE2000: 2,7</p>
              </div>
              <DeltaEChart />
            </section>
            <section className="pt-[52px]">
              <div className="grid grid-cols-[198fr_198fr_209fr]">
                <DeltaChart title="Delta L" id="deltaL" width={198} max={4} step={1} value={0.46} />
                <DeltaChart title="Delta C" id="deltaC" width={198} max={6} step={2} value={5.58} />
                <DeltaChart title="Delta H" id="deltaH" width={209} max={4} step={1} value={-1.25} />
              </div>
              <SwatchPanel />
            </section>
            <section className="overflow-hidden pt-[53px] pl-3">
              <div className="mr-[-5px] border-[7px] border-[#ffff00]">
                <CieChart />
              </div>
            </section>
          </div>
          <div className="flex">
            <section className="w-[335px] shrink-0 pt-4 pl-[15px]">
              <h2 className="text-[32px] leading-[43px]">Current Reading</h2>
              <div className="text-[28px] leading-[43px]">
                <p>x: 0,4243</p>
                <p>y: 0,5109</p>
                <p>fL: 170,667</p>
                <p>cd/m²: 584,75</p>
              </div>
            </section>
            <ReadingsTable />
          </div>
        </main>
        <div className="bg-[#303030]">
          <BottomBar />
        </div>
      </div>
    </div>
  </div>
);

export default App;
